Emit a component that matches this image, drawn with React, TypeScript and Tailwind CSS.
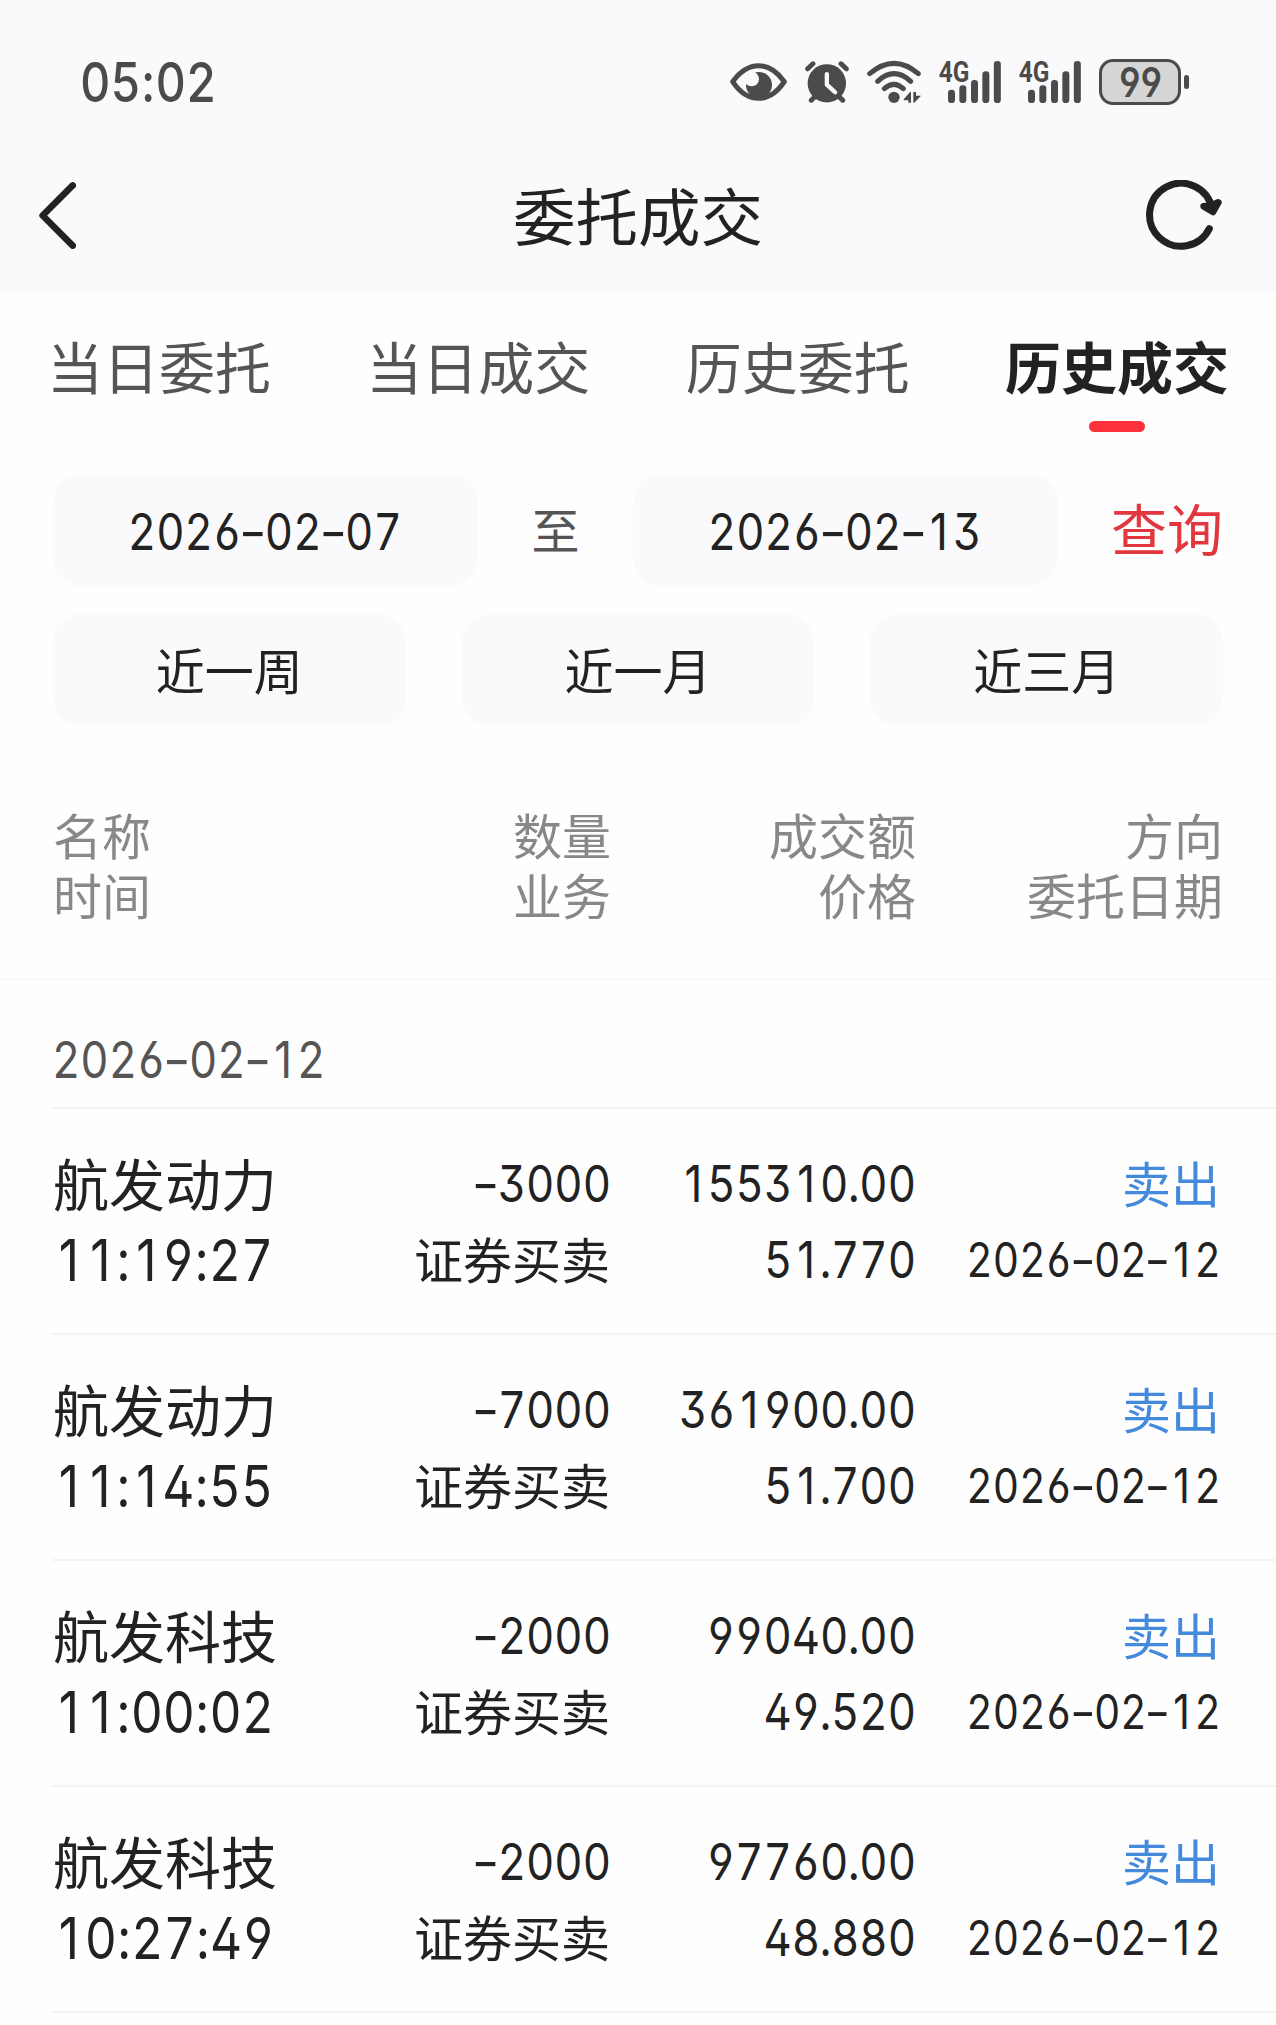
import clsx from 'clsx'

const tabs = ['当日委托', '当日成交', '历史委托', '历史成交']

const ranges = ['近一周', '近一月', '近三月']

const columns = [
  ['名称', '时间'],
  ['数量', '业务'],
  ['成交额', '价格'],
  ['方向', '委托日期'],
]

const deals = [
  { name: '航发动力', time: '11:19:27', count: '-3000', amount: '155310.00', price: '51.770' },
  { name: '航发动力', time: '11:14:55', count: '-7000', amount: '361900.00', price: '51.700' },
  { name: '航发科技', time: '11:00:02', count: '-2000', amount: '99040.00', price: '49.520' },
  { name: '航发科技', time: '10:27:49', count: '-2000', amount: '97760.00', price: '48.880' },
]

// Narrow tabular digits; separators keep their own width and the 1 has no foot
function Num({ children, className }: { children: string; className?: string }) {
  return (
    <span
      className={clsx(
        "inline-block whitespace-nowrap font-['Inter',sans-serif] scale-x-[0.857] [font-feature-settings:'ss01','tnum']",
        className,
      )}
    >
      {children.split(/([-:.1])/).map((part, i) => (
        <span
          key={i}
          className={clsx(
            /^[-:.1]$/.test(part) && '[font-feature-settings:normal]',
            part === '-' && 'inline-block w-[0.54em] text-center scale-x-[1.4]',
            part === '.' && '-mx-[0.02em]',
            part === '1' && 'inline-block w-[0.637em] text-center',
          )}
        >
          {part}
        </span>
      ))}
    </span>
  )
}

function EyeIcon() {
  return (
    <svg viewBox="84 54 171 144" className="w-[57px] h-12">
      <path
        d="M92 125C115 93 142 77 170 77S224 93 247 125C224 160 198 175 170 175S115 160 92 125Z"
        fill="none"
        stroke="#4b4b4b"
        strokeWidth="15"
        strokeLinejoin="round"
      />
      <circle cx="171" cy="135" r="39" fill="#4b4b4b" />
      <circle cx="149" cy="117" r="22" fill="#fafafc" />
    </svg>
  )
}

function AlarmIcon() {
  return (
    <svg viewBox="310 54 133 144" className="w-11 h-12" fill="none" strokeLinecap="round">
      <circle cx="376" cy="130" r="58" fill="#4b4b4b" />
      <path d="M318 86L334 71M419 71L435 86M329 181L342 168M424 181L411 168" stroke="#4b4b4b" strokeWidth="15" />
      <path d="M376 102V134L401 157" stroke="#fafafc" strokeWidth="13" strokeLinejoin="round" />
    </svg>
  )
}

function WifiIcon() {
  return (
    <svg viewBox="498 54 162 144" className="w-[54px] h-12" fill="#4b4b4b">
      <path
        d="M506 101Q579 39 652 101M530 124Q579 78 629 124M550 146Q579 120 607 146"
        fill="none"
        stroke="#4b4b4b"
        strokeWidth="15"
        strokeLinecap="round"
      />
      <circle cx="579" cy="172" r="17" />
      <path d="M608 178L627 156H630V188H622V181H608ZM637 156H645V167H660L640 188H637Z" />
    </svg>
  )
}

function SignalIcon() {
  return (
    <svg viewBox="54 54 186 144" className="w-[62px] h-12 overflow-visible" fill="#4b4b4b">
      <text
        x="53"
        y="125"
        fontSize="86"
        fontWeight="700"
        fontFamily="Roboto, sans-serif"
        textLength="92"
        lengthAdjust="spacingAndGlyphs"
      >
        4G
      </text>
      <rect x="81" y="149" width="21" height="40" rx="10" />
      <rect x="115" y="136" width="21" height="53" rx="10" />
      <rect x="150" y="120" width="21" height="69" rx="10" />
      <rect x="184" y="94" width="21" height="95" rx="10" />
      <rect x="218.5" y="63" width="21" height="126" rx="10" />
    </svg>
  )
}

function StatusBar() {
  return (
    <div className="h-[164px] pl-[80px] pr-[87px] flex items-center justify-between text-[#4b4b4b]">
      <Num className="text-[55px] font-medium origin-left">05:02</Num>
      <div className="flex items-center gap-[18px]">
        <EyeIcon />
        <AlarmIcon />
        <WifiIcon />
        <SignalIcon />
        <SignalIcon />
        <div className="flex items-center gap-[3px]">
          <div className="w-[82px] h-[46px] rounded-[14px] border-[3px] border-[#4b4b4b] bg-[#d6d6d6] flex items-center justify-center">
            <Num className="text-[41px] leading-[40px] font-semibold tracking-[-0.04em]">99</Num>
          </div>
          <div className="w-[5px] h-[14px] rounded-full bg-[#4b4b4b]" />
        </div>
      </div>
    </div>
  )
}

function NavBar() {
  return (
    <div className="h-[102px] pl-[39px] pr-[54px] grid grid-cols-[76px_1fr_76px] items-center">
      <svg viewBox="117 94 112 202" className="w-[37px] h-[67px]" fill="none">
        <path d="M219 104L128 195L219 286" stroke="#222" strokeWidth="20" strokeLinecap="round" strokeLinejoin="round" />
      </svg>
      <h1 className="text-[62.5px] leading-[100px] h-[102px] pl-[15px] text-center">委托成交</h1>
      <svg viewBox="138 90 228 210" className="w-[76px] h-[70px]" fill="none" stroke="#222" strokeLinecap="round">
        <path d="M328 236A94.5 94.5 0 1 1 336 176" strokeWidth="21" />
        <path d="M311 169L339 186L355 157L334 166Z" fill="#222" strokeWidth="20" strokeLinejoin="round" />
      </svg>
    </div>
  )
}

function Filters() {
  return (
    <div className="px-[53px] flex flex-col gap-7">
      <div className="h-28 flex items-center">
        <button className="w-[425px] h-28 pr-[2px] rounded-[28px] bg-[#fafafc] text-[51px]">
          <Num>2026-02-07</Num>
        </button>
        <span className="flex-1 h-28 leading-[109px] text-center text-[48px] text-[#555]">至</span>
        <button className="w-[425px] h-28 pr-[2px] rounded-[28px] bg-[#fafafc] text-[51px]">
          <Num>2026-02-13</Num>
        </button>
        <button className="w-[165px] h-28 pb-[7px] leading-[102px] text-right text-[56px] text-[#e3373f]">查询</button>
      </div>
      <div className="grid grid-cols-3 gap-14">
        {ranges.map((r) => (
          <button key={r} className="h-28 rounded-[28px] bg-[#fafafc] text-[49px] leading-[106px] pb-[3px]">
            {r}
          </button>
        ))}
      </div>
    </div>
  )
}

export default function App() {
  return (
    <div className="w-[1276px] h-[2025px] overflow-hidden bg-[#fefefe] text-[#222] whitespace-nowrap font-['Noto_Sans_CJK_SC',sans-serif]">
      <header className="bg-[#fafafc] pb-[26px]">
        <StatusBar />
        <NavBar />
      </header>

      <nav className="pt-[33px] px-[47px] flex justify-between">
        {tabs.map((tab, i) => {
          const active = i === tabs.length - 1
          return (
            <div key={tab} className="h-[149px] flex flex-col items-center text-[56px] leading-[80px]">
              <span className={active ? 'font-bold' : 'text-[#555]'}>{tab}</span>
              {active && <span className="mt-4 w-14 h-[11px] rounded-full bg-[#fb323c]" />}
            </div>
          )
        })}
      </nav>

      <Filters />

      <div className="mt-[78px] pl-[53px] pr-[53px] pb-[54px] border-b-2 border-[#f8f8f9] grid grid-cols-[253px_305px_305px_307px] text-[49px] leading-[60px] text-[#888]">
        {columns.map(([top, bottom], i) => (
          <div key={top} className={clsx(i > 0 && 'text-right')}>
            <p>{top}</p>
            <p>{bottom}</p>
          </div>
        ))}
      </div>

      <div className="ml-[52px] pt-[50px] pb-[17px] border-b-2 border-[#f3f3f4] flex text-[51px] leading-[60px] text-[#555]">
        <Num className="origin-left">2026-02-12</Num>
      </div>

      {deals.map((d) => (
        <div
          key={d.time}
          className="ml-[52px] pl-px pr-[55px] h-[226px] pt-[37px] border-b-2 border-[#f3f3f4] grid grid-cols-[253px_305px_305px_305px] auto-rows-[76px] text-[51px] leading-[76px] text-right"
        >
          <div className="text-left text-[56px] leading-[72px]">{d.name}</div>
          <Num className="origin-right">{d.count}</Num>
          <Num className="origin-right">{d.amount}</Num>
          <div className="pr-px text-[49px] leading-[71px] text-[#4389dc]">卖出</div>
          <Num className="text-left text-[58px] origin-left">{d.time}</Num>
          <div className="pr-px text-[49px] leading-[71px]">证券买卖</div>
          <Num className="origin-right">{d.price}</Num>
          <Num className="text-[47.5px] origin-right">2026-02-12</Num>
        </div>
      ))}
    </div>
  )
}
